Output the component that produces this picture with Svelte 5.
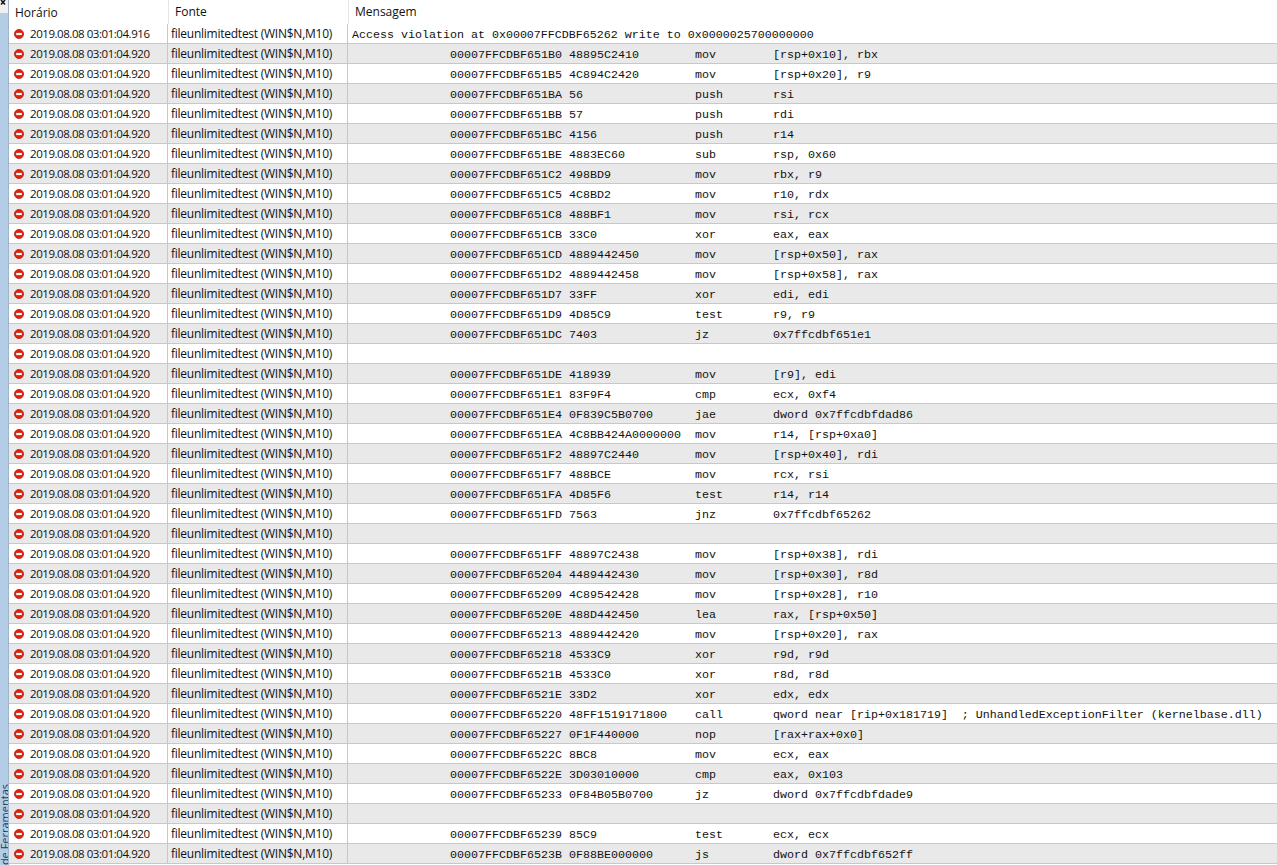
<script>
	const stamp = '2019.08.08 03:01:04.920';
	const source = 'fileunlimitedtest (WIN$N,M10)';

	// addr, bytes, mnemonic, operands; an empty row has no address
	const listing = [
		['00007FFCDBF651B0', '48895C2410', 'mov', '[rsp+0x10], rbx'],
		['00007FFCDBF651B5', '4C894C2420', 'mov', '[rsp+0x20], r9'],
		['00007FFCDBF651BA', '56', 'push', 'rsi'],
		['00007FFCDBF651BB', '57', 'push', 'rdi'],
		['00007FFCDBF651BC', '4156', 'push', 'r14'],
		['00007FFCDBF651BE', '4883EC60', 'sub', 'rsp, 0x60'],
		['00007FFCDBF651C2', '498BD9', 'mov', 'rbx, r9'],
		['00007FFCDBF651C5', '4C8BD2', 'mov', 'r10, rdx'],
		['00007FFCDBF651C8', '488BF1', 'mov', 'rsi, rcx'],
		['00007FFCDBF651CB', '33C0', 'xor', 'eax, eax'],
		['00007FFCDBF651CD', '4889442450', 'mov', '[rsp+0x50], rax'],
		['00007FFCDBF651D2', '4889442458', 'mov', '[rsp+0x58], rax'],
		['00007FFCDBF651D7', '33FF', 'xor', 'edi, edi'],
		['00007FFCDBF651D9', '4D85C9', 'test', 'r9, r9'],
		['00007FFCDBF651DC', '7403', 'jz', '0x7ffcdbf651e1'],
		[],
		['00007FFCDBF651DE', '418939', 'mov', '[r9], edi'],
		['00007FFCDBF651E1', '83F9F4', 'cmp', 'ecx, 0xf4'],
		['00007FFCDBF651E4', '0F839C5B0700', 'jae', 'dword 0x7ffcdbfdad86'],
		['00007FFCDBF651EA', '4C8BB424A0000000', 'mov', 'r14, [rsp+0xa0]'],
		['00007FFCDBF651F2', '48897C2440', 'mov', '[rsp+0x40], rdi'],
		['00007FFCDBF651F7', '488BCE', 'mov', 'rcx, rsi'],
		['00007FFCDBF651FA', '4D85F6', 'test', 'r14, r14'],
		['00007FFCDBF651FD', '7563', 'jnz', '0x7ffcdbf65262'],
		[],
		['00007FFCDBF651FF', '48897C2438', 'mov', '[rsp+0x38], rdi'],
		['00007FFCDBF65204', '4489442430', 'mov', '[rsp+0x30], r8d'],
		['00007FFCDBF65209', '4C89542428', 'mov', '[rsp+0x28], r10'],
		['00007FFCDBF6520E', '488D442450', 'lea', 'rax, [rsp+0x50]'],
		['00007FFCDBF65213', '4889442420', 'mov', '[rsp+0x20], rax'],
		['00007FFCDBF65218', '4533C9', 'xor', 'r9d, r9d'],
		['00007FFCDBF6521B', '4533C0', 'xor', 'r8d, r8d'],
		['00007FFCDBF6521E', '33D2', 'xor', 'edx, edx'],
		['00007FFCDBF65220', '48FF1519171800', 'call', 'qword near [rip+0x181719]  ; UnhandledExceptionFilter (kernelbase.dll)'],
		['00007FFCDBF65227', '0F1F440000', 'nop', '[rax+rax+0x0]'],
		['00007FFCDBF6522C', '8BC8', 'mov', 'ecx, eax'],
		['00007FFCDBF6522E', '3D03010000', 'cmp', 'eax, 0x103'],
		['00007FFCDBF65233', '0F84B05B0700', 'jz', 'dword 0x7ffcdbfdade9'],
		[],
		['00007FFCDBF65239', '85C9', 'test', 'ecx, ecx'],
		['00007FFCDBF6523B', '0F88BE000000', 'js', 'dword 0x7ffcdbf652ff']
	];

	const rows = [
		{ time: '2019.08.08 03:01:04.916', text: 'Access violation at 0x00007FFCDBF65262 write to 0x0000025700000000' },
		...listing.map((line) => ({ time: stamp, line }))
	];
</script>

<div class="window">
	<aside class="dock">
		<div class="close">
			<svg width="8" height="6" viewBox="0 0 8 6">
				<path d="M1 0 L5 4.5 M5 0 L1 4.5" stroke="#111" stroke-width="1.5" fill="none" />
			</svg>
		</div>
		<div class="tab"><span>de Ferramentas</span></div>
	</aside>
	<main class="log">
		<div class="head">
			<div class="h-time">Horário</div>
			<div class="h-source">Fonte</div>
			<div class="h-msg">Mensagem</div>
		</div>
		{#each rows as row, i}
			<div class="row" class:alt={i % 2 === 1}>
				<div class="time">
					<svg class="err" width="10" height="10" viewBox="0 0 10 10">
						<circle cx="5" cy="5" r="4.6" fill="#e0200c" stroke="#b8281c" stroke-width="0.8" />
						<rect x="2.2" y="3.9" width="5.6" height="2.2" fill="#fff" />
					</svg>
					<span>{row.time}</span>
				</div>
				<div class="source">{source}</div>
				<div class="msg">
					{#if row.text}
						{row.text}
					{:else if row.line.length}
						<span class="addr">{row.line[0]}</span><span class="bytes">{row.line[1]}</span><span class="op">{row.line[2]}</span><span class="args">{row.line[3]}</span>
					{/if}
				</div>
			</div>
		{/each}
	</main>
</div>

<style>
	:global(body) {
		margin: 0;
		background: #fff;
	}

	.window {
		display: flex;
		height: 865px;
		width: 1277px;
		overflow: hidden;
		font-family: "Open Sans", "Liberation Sans", sans-serif;
		font-size: 12px;
		color: #111;
	}

	.dock {
		flex: 0 0 8px;
		display: flex;
		flex-direction: column;
		background: #b4cde6;
		border-right: 1px solid #9fb4ca;
		overflow: hidden;
	}

	.close {
		height: 13px;
		background: #f0f0f0;
		line-height: 0;
	}

	.tab {
		flex: 1;
		display: flex;
		flex-direction: column;
		justify-content: flex-end;
		align-items: center;
	}

	.tab span {
		writing-mode: vertical-rl;
		transform: rotate(180deg);
		white-space: nowrap;
		font-size: 11px;
		line-height: 9px;
		color: #1f3a5c;
	}

	.log {
		flex: 1;
		min-width: 0;
	}

	.head {
		display: flex;
		height: 24px;
		align-items: center;
	}

	.h-time {
		width: 159px;
		padding-left: 6px;
		box-sizing: border-box;
	}

	.h-source {
		width: 180px;
		padding-left: 6px;
		box-sizing: border-box;
		border-left: 1px solid #e5e5e5;
		height: 100%;
		line-height: 24px;
	}

	.h-msg {
		padding-left: 6px;
		border-left: 1px solid #e5e5e5;
		height: 100%;
		line-height: 24px;
	}

	.row {
		display: flex;
		height: 20px;
		box-sizing: border-box;
		border-bottom: 1px solid #c8c8c8;
		line-height: 19px;
		white-space: nowrap;
	}

	.row.alt {
		background: #e9e9e9;
	}

	.time {
		width: 159px;
		display: flex;
		align-items: center;
		box-sizing: border-box;
		padding-left: 5px;
		gap: 6px;
		border-right: 1px solid #c8c8c8;
		font-size: 11.5px;
		letter-spacing: -0.45px;
	}

	.err {
		flex: none;
	}

	.source {
		width: 180px;
		box-sizing: border-box;
		padding-left: 3px;
		border-right: 1px solid #c8c8c8;
		letter-spacing: -0.25px;
	}

	.msg {
		padding: 1px 0 0 4px;
		font-family: "Liberation Mono", "Courier New", monospace;
		font-size: 11.67px;
		line-height: 21px;
		white-space: nowrap;
	}

	.addr {
		display: inline-block;
		margin-left: 98px;
		width: 119px;
	}

	.bytes {
		display: inline-block;
		width: 126px;
	}

	.op {
		display: inline-block;
		width: 78px;
	}

	.args {
		white-space: pre;
	}
</style>
